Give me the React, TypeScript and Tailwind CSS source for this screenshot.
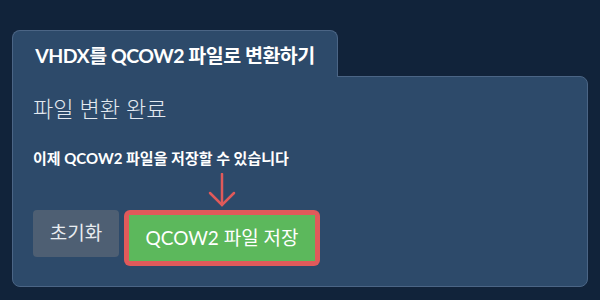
import React from 'react';

const font = { fontFamily: 'Lato, "Noto Sans CJK KR", sans-serif' };

export default function App() {
  return (
    <div className="w-[600px] h-[300px] bg-[#11233a] px-3 pt-[30px]" style={font}>
      <div className="relative z-10 -mb-px flex h-[47px] w-[326px] items-center justify-center rounded-t-lg border border-b-0 border-[#4b6585] bg-[#2d4a6a] pt-1">
        <h1 className="text-[19.5px] font-bold tracking-tight text-white">VHDX를 QCOW2 파일로 변환하기</h1>
      </div>
      <div className="h-[211px] w-[576px] rounded-lg rounded-tl-none border border-[#4b6585] bg-[#2d4a6a] px-5 pt-[18px]">
        <h2 className="text-[22px] font-light leading-7 text-[#e3e9f0]">파일 변환 완료</h2>
        <p className="mt-[25px] text-[15px] font-bold leading-5 text-white">이제 QCOW2 파일을 저장할 수 있습니다</p>
        <div className="h-[42px] pl-[174px] pt-[5px]">
          <svg width="30" height="34" viewBox="0 0 30 34" fill="none" stroke="#e05a5a" strokeWidth="2.5" strokeLinecap="round">
            <path d="M15 1 V32" />
            <path d="M3 20 L15 32 L27 20" />
          </svg>
        </div>
        <div className="flex items-start gap-[5px]">
          <button className="flex h-[47px] w-[86px] items-center justify-center rounded bg-[#4e5f73] text-[19px] text-[#e8ecf0]">초기화</button>
          <div className="rounded-md bg-[#e05a5a] p-[5px]">
            <button className="flex h-[46px] w-[186px] items-center justify-center bg-[#5cb85c] text-[19px] text-white">QCOW2 파일 저장</button>
          </div>
        </div>
      </div>
    </div>
  );
}
